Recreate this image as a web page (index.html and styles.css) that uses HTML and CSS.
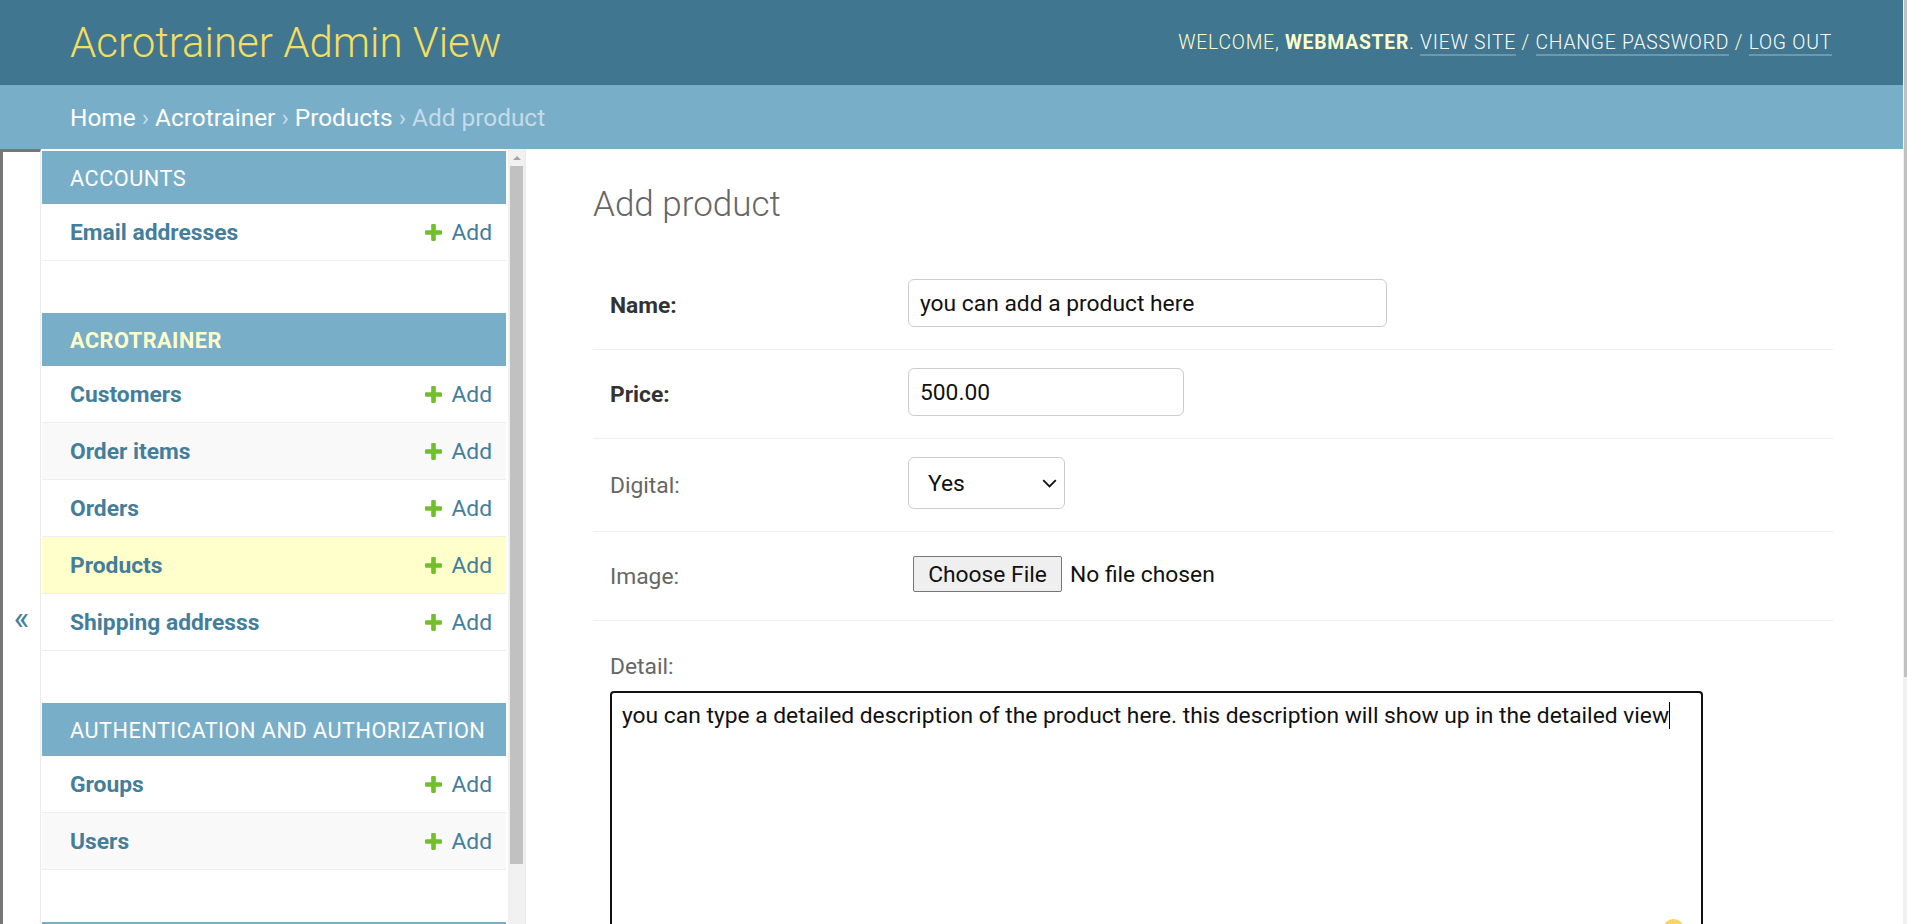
FILE: index.html
```html
<!DOCTYPE html>
<html lang="en">
<head>
<meta charset="utf-8">
<title>Add product | Acrotrainer Admin View</title>
<link rel="stylesheet" href="styles.css">
</head>
<body>
<div class="viewport">
  <div class="site">
    <header class="header">
      <div class="branding"><h1 class="site-name">Acrotrainer Admin View</h1></div>
      <div class="user-tools">Welcome, <strong>webmaster</strong>. <a href="#">View site</a> / <a href="#">Change password</a> / <a href="#">Log out</a></div>
    </header>
    <div class="breadcrumbs"><a href="#">Home</a> › <a href="#">Acrotrainer</a> › <a href="#">Products</a> › Add product</div>
    <div class="main">
      <button class="toggle-nav" type="button"><span>«</span></button>
      <nav class="nav-sidebar">
        <div class="nav-list">
          <div class="module">
            <div class="caption">Accounts</div>
            <div class="model-row"><a class="model" href="#">Email addresses</a><a class="addlink" href="#"><svg viewBox="192 192 1408 1408" class="plus"><path fill="#70bf2b" d="M1600 796v192q0 40-28 68t-68 28h-416v416q0 40-28 68t-68 28h-192q-40 0-68-28t-28-68v-416h-416q-40 0-68-28t-28-68v-192q0-40 28-68t68-28h416v-416q0-40 28-68t68-28h192q40 0 68 28t28 68v416h416q40 0 68 28t28 68z"/></svg>Add</a></div>
          </div>
          <div class="module">
            <div class="caption current-app">Acrotrainer</div>
            <div class="model-row"><a class="model" href="#">Customers</a><a class="addlink" href="#"><svg viewBox="192 192 1408 1408" class="plus"><path fill="#70bf2b" d="M1600 796v192q0 40-28 68t-68 28h-416v416q0 40-28 68t-68 28h-192q-40 0-68-28t-28-68v-416h-416q-40 0-68-28t-28-68v-192q0-40 28-68t68-28h416v-416q0-40 28-68t68-28h192q40 0 68 28t28 68v416h416q40 0 68 28t28 68z"/></svg>Add</a></div>
            <div class="model-row"><a class="model" href="#">Order items</a><a class="addlink" href="#"><svg viewBox="192 192 1408 1408" class="plus"><path fill="#70bf2b" d="M1600 796v192q0 40-28 68t-68 28h-416v416q0 40-28 68t-68 28h-192q-40 0-68-28t-28-68v-416h-416q-40 0-68-28t-28-68v-192q0-40 28-68t68-28h416v-416q0-40 28-68t68-28h192q40 0 68 28t28 68v416h416q40 0 68 28t28 68z"/></svg>Add</a></div>
            <div class="model-row"><a class="model" href="#">Orders</a><a class="addlink" href="#"><svg viewBox="192 192 1408 1408" class="plus"><path fill="#70bf2b" d="M1600 796v192q0 40-28 68t-68 28h-416v416q0 40-28 68t-68 28h-192q-40 0-68-28t-28-68v-416h-416q-40 0-68-28t-28-68v-192q0-40 28-68t68-28h416v-416q0-40 28-68t68-28h192q40 0 68 28t28 68v416h416q40 0 68 28t28 68z"/></svg>Add</a></div>
            <div class="model-row current-model"><a class="model" href="#">Products</a><a class="addlink" href="#"><svg viewBox="192 192 1408 1408" class="plus"><path fill="#70bf2b" d="M1600 796v192q0 40-28 68t-68 28h-416v416q0 40-28 68t-68 28h-192q-40 0-68-28t-28-68v-416h-416q-40 0-68-28t-28-68v-192q0-40 28-68t68-28h416v-416q0-40 28-68t68-28h192q40 0 68 28t28 68v416h416q40 0 68 28t28 68z"/></svg>Add</a></div>
            <div class="model-row"><a class="model" href="#">Shipping addresss</a><a class="addlink" href="#"><svg viewBox="192 192 1408 1408" class="plus"><path fill="#70bf2b" d="M1600 796v192q0 40-28 68t-68 28h-416v416q0 40-28 68t-68 28h-192q-40 0-68-28t-28-68v-416h-416q-40 0-68-28t-28-68v-192q0-40 28-68t68-28h416v-416q0-40 28-68t68-28h192q40 0 68 28t28 68v416h416q40 0 68 28t28 68z"/></svg>Add</a></div>
          </div>
          <div class="module">
            <div class="caption">Authentication and Authorization</div>
            <div class="model-row"><a class="model" href="#">Groups</a><a class="addlink" href="#"><svg viewBox="192 192 1408 1408" class="plus"><path fill="#70bf2b" d="M1600 796v192q0 40-28 68t-68 28h-416v416q0 40-28 68t-68 28h-192q-40 0-68-28t-28-68v-416h-416q-40 0-68-28t-28-68v-192q0-40 28-68t68-28h416v-416q0-40 28-68t68-28h192q40 0 68 28t28 68v416h416q40 0 68 28t28 68z"/></svg>Add</a></div>
            <div class="model-row"><a class="model" href="#">Users</a><a class="addlink" href="#"><svg viewBox="192 192 1408 1408" class="plus"><path fill="#70bf2b" d="M1600 796v192q0 40-28 68t-68 28h-416v416q0 40-28 68t-68 28h-192q-40 0-68-28t-28-68v-416h-416q-40 0-68-28t-28-68v-192q0-40 28-68t68-28h416v-416q0-40 28-68t68-28h192q40 0 68 28t28 68v416h416q40 0 68 28t28 68z"/></svg>Add</a></div>
          </div>
          <div class="module">
            <div class="caption caption-empty"></div>
          </div>
        </div>
        <div class="nav-scrollbar"><div class="nav-arrow"></div><div class="nav-thumb"></div></div>
      </nav>
      <div class="content">
        <h1 class="page-title">Add product</h1>
        <form class="aligned">
          <div class="form-row">
            <label class="required">Name:</label>
            <input class="text-field name-field" type="text" value="you can add a product here">
          </div>
          <div class="form-row">
            <label class="required">Price:</label>
            <input class="text-field price-field" type="text" value="500.00">
          </div>
          <div class="form-row">
            <label>Digital:</label>
            <div class="select-wrap">
              <select class="select-field"><option>Yes</option><option>No</option></select>
              <svg class="chevron" viewBox="0 0 15 9"><path d="M1.2 1.2l6.3 6.3 6.3-6.3" fill="none" stroke="#111" stroke-width="1.8"/></svg>
            </div>
          </div>
          <div class="form-row">
            <label>Image:</label>
            <div class="file-field">
              <button class="file-button" type="button">Choose File</button>
              <span class="file-name">No file chosen</span>
            </div>
          </div>
          <div class="form-row detail-row">
            <label>Detail:</label>
            <div class="textarea-wrap">
              <div class="textarea">you can type a detailed description of the product here. this description will show up in the detailed view<span class="caret"></span></div>
              <span class="widget-dot"></span>
            </div>
          </div>
        </form>
      </div>
    </div>
  </div>
  <div class="page-scrollbar"><div class="page-thumb"></div></div>
</div>
</body>
</html>
```

FILE: styles.css
```css
* { box-sizing: border-box; }

html, body {
  margin: 0;
  padding: 0;
}

body {
  width: 1907px;
  height: 924px;
  overflow: hidden;
  font-family: Roboto, "Liberation Sans", Arial, sans-serif;
  color: #333;
  background: #fff;
}

a { text-decoration: none; }

.viewport {
  display: flex;
  height: 924px;
}

.site {
  width: 1903px;
  display: flex;
  flex-direction: column;
  overflow: hidden;
}

/* header */
.header {
  height: 85px;
  flex: 0 0 85px;
  background: #417690;
  display: flex;
  justify-content: space-between;
  align-items: flex-start;
  padding: 0 71px 0 70px;
}

.branding { padding-top: 18px; }

.site-name {
  margin: 0;
  font-size: 42px;
  line-height: 49px;
  font-weight: 300;
  color: #f5dd5d;
}

.user-tools {
  padding-top: 31px;
  font-size: 19.3px;
  line-height: 23px;
  font-weight: 300;
  letter-spacing: 0.8px;
  text-transform: uppercase;
  color: #ffc;
}

.user-tools strong { font-weight: 700; }

.user-tools a {
  color: #fff;
  border-bottom: 2px solid rgba(255, 255, 255, 0.25);
}

/* breadcrumbs */
.breadcrumbs {
  height: 64px;
  flex: 0 0 64px;
  background: #79aec8;
  padding: 17px 70px 0;
  font-size: 24.4px;
  line-height: 31px;
  color: #c4dce8;
}

.breadcrumbs a { color: #fff; }

/* main */
.main {
  flex: 1;
  display: flex;
  min-height: 0;
}

.toggle-nav {
  flex: 0 0 41px;
  width: 41px;
  height: 935px;
  margin: 0;
  padding: 0;
  border: 0;
  border-left: 3px solid #767676;
  border-top: 3px solid #767676;
  border-right: 1px solid #eaeaea;
  background: #fff;
  color: #447e9b;
  font-family: Roboto, "Liberation Sans", sans-serif;
  font-size: 33px;
  line-height: 40px;
  text-align: center;
  align-self: flex-start;
}

.toggle-nav span { display: block; }

.nav-sidebar {
  flex: 0 0 485px;
  display: flex;
  border-right: 1px solid #eaeaea;
  overflow: hidden;
}

.nav-list {
  width: 467px;
  padding: 2px 0 0 1px;
}

.module {
  width: 464px;
  margin-bottom: 52px;
}

.caption {
  height: 53px;
  line-height: 55px;
  padding-left: 28px;
  background: #79aec8;
  color: #fff;
  font-size: 21.7px;
  font-weight: 400;
  letter-spacing: 0.5px;
  text-transform: uppercase;
}

.caption.current-app {
  color: #ffc;
  font-weight: 700;
}

.model-row {
  height: 57px;
  display: flex;
  align-items: center;
  justify-content: space-between;
  padding: 1px 14px 0 28px;
  border-bottom: 1px solid #eee;
  font-size: 22.8px;
  line-height: 27px;
  background: #fff;
}

.model-row:nth-child(odd) { background: #f9f9f9; }
.model-row.current-model { background: #ffc; }

.model {
  color: #447e9b;
  font-weight: 700;
}

.addlink {
  color: #447e9b;
  display: flex;
  align-items: center;
  gap: 9px;
}

.plus {
  width: 17px;
  height: 17px;
  display: block;
}

.nav-scrollbar {
  width: 17px;
  flex: 0 0 17px;
  background: #f1f1f1;
}

.nav-arrow {
  width: 0;
  height: 0;
  margin: 7px auto 6px;
  border-left: 4px solid transparent;
  border-right: 4px solid transparent;
  border-bottom: 4px solid #a3a3a3;
}

.nav-thumb {
  width: 13px;
  height: 698px;
  margin: 1px 2px 0;
  background: #c1c1c1;
}

/* content */
.content {
  flex: 1;
  padding: 36px 70px 0 67px;
  min-width: 0;
}

.page-title {
  margin: 0 0 37px;
  font-size: 35px;
  line-height: 39px;
  font-weight: 300;
  color: #666;
}

.form-row {
  display: flex;
  align-items: center;
  padding: 18px 17px 22px;
  border-bottom: 1px solid #eee;
}

.form-row label {
  flex: 0 0 298px;
  padding-top: 6px;
  font-size: 22.8px;
  line-height: 28px;
  color: #666;
}

.form-row label.required {
  color: #333;
  font-weight: 700;
}

.text-field {
  height: 48px;
  margin: 0;
  padding: 0 11px;
  border: 1px solid #ccc;
  border-radius: 6px;
  font-family: Roboto, "Liberation Sans", sans-serif;
  font-size: 22.8px;
  color: #111;
  background: #fff;
}

.name-field { width: 479px; }
.price-field { width: 276px; }

.select-wrap {
  position: relative;
  width: 157px;
  height: 52px;
}

.select-field {
  appearance: none;
  -webkit-appearance: none;
  width: 157px;
  height: 52px;
  margin: 0;
  padding: 0 0 0 19px;
  border: 1px solid #ccc;
  border-radius: 6px;
  background: #fff;
  font-family: Roboto, "Liberation Sans", sans-serif;
  font-size: 22.8px;
  color: #111;
}

.chevron {
  position: absolute;
  left: 134px;
  top: 22px;
  width: 15px;
  height: 9px;
}

.file-field {
  height: 48px;
  display: flex;
  align-items: center;
  padding-left: 5px;
}

.file-button {
  height: 36px;
  width: 149px;
  margin: 0;
  padding: 0;
  border: 1px solid #767676;
  border-radius: 2px;
  background: #efefef;
  font-family: Roboto, "Liberation Sans", sans-serif;
  font-size: 22.8px;
  color: #111;
}

.file-name {
  margin-left: 8px;
  font-size: 22.8px;
  color: #111;
}

.detail-row {
  display: block;
  border-bottom: 0;
}

.detail-row label {
  display: block;
  padding-top: 14px;
  margin-bottom: 10px;
}

.textarea-wrap {
  position: relative;
  width: 1093px;
}

.textarea {
  width: 1093px;
  height: 320px;
  padding: 6px 10px;
  border: 2px solid #111;
  border-radius: 4px;
  font-size: 22.8px;
  line-height: 33px;
  color: #111;
}

.caret {
  display: inline-block;
  width: 0;
  height: 27px;
  border-left: 1.5px solid #000;
  vertical-align: -6px;
}

.widget-dot {
  position: absolute;
  left: 1053px;
  top: 228px;
  width: 21px;
  height: 21px;
  border-radius: 50%;
  background: #f8d46a;
}

/* page scrollbar */
.page-scrollbar {
  width: 4px;
  flex: 0 0 4px;
  background: #f1f1f1;
}

.page-thumb {
  width: 3px;
  margin-left: 1px;
  height: 677px;
  background: #c1c1c1;
}
```
